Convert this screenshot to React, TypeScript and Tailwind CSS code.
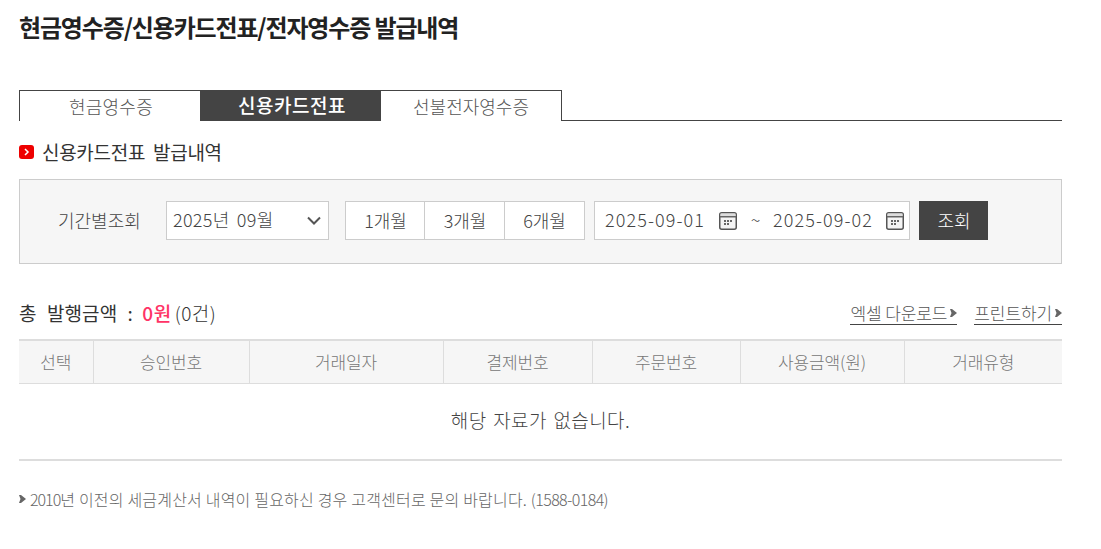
function Cal() {
  return (
    <svg width="18" height="18" viewBox="0 0 18 18" className="shrink-0">
      <rect x="0.75" y="0.75" width="16.5" height="16.5" rx="2" fill="#f4f4f4" stroke="#555" strokeWidth="1.5" />
      <rect x="1.5" y="1.5" width="15" height="2.5" fill="#ddd" />
      <rect x="1" y="4" width="16" height="1.5" fill="#666" />
      <path d="M5 8h2v2H5zM8 8h2v2H8zM11 8h2v2h-2zM5 11h2v2H5zM8 11h2v2H8z" fill="#666" />
    </svg>
  );
}
function Arrow() {
  return (
    <svg width="7" height="8" viewBox="0 0 7 8" className="inline-block shrink-0">
      <path d="M0 0h2l5 4-5 4H0l1.5-4z" fill="#666" />
    </svg>
  );
}
const cols = [
  ["선택", "w-[74px]"],
  ["승인번호", "w-[156px]"],
  ["거래일자", "w-[194px]"],
  ["결제번호", "w-[149px]"],
  ["주문번호", "w-[148px]"],
  ["사용금액(원)", "w-[164px]"],
  ["거래유형", "w-[158px]"],
];
export default function App() {
  return (
    <div className="w-[1101px] h-[549px] overflow-hidden bg-white pl-[19px] pr-[39px] font-['Noto_Sans_CJK_KR',sans-serif] text-[#333]">
      <h1 className="h-[90px] pt-[9px] text-[24px] leading-[36px] font-bold tracking-[-1.15px] text-[#222]">
        현금영수증/신용카드전표/전자영수증 발급내역
      </h1>
      <div className="flex h-[31px] text-[18px]">
        <div className="flex w-[181px] items-center justify-center border-l border-t border-[#444] pl-[2px] font-light tracking-[0.2px] text-[#555]">현금영수증</div>
        <div className="flex w-[181px] items-center justify-center bg-[#444] pl-[3px] text-[19px] font-medium tracking-[0.5px] text-white">신용카드전표</div>
        <div className="flex w-[181px] items-center justify-center border-r border-t border-[#444] bg-white font-light text-[#555]">
          <span>선불전자영수증</span>
        </div>
        <div className="flex-1 border-b border-[#444]" />
      </div>
      <div className="mt-[19px] flex h-[24px] items-center gap-[8px] text-[19px] tracking-[-0.3px] [word-spacing:4px] text-[#333]">
        <svg width="15" height="14" viewBox="0 0 15 14">
          <rect width="15" height="14" rx="3" fill="#ee0000" />
          <path d="M6 4L9 7L6 10" fill="none" stroke="#fff" strokeWidth="1.5" />
        </svg>
        <span>신용카드전표 발급내역</span>
      </div>
      <div className="mt-[15px] flex h-[85px] items-center border border-[#ccc] bg-[#f6f6f6] pb-[2px] pl-[38px] text-[18px] font-light text-[#444]">
        <span className="w-[108px] pb-[1px]">기간별조회</span>
        <div className="flex h-[39px] w-[163px] items-center justify-between border border-[#ccc] bg-white pl-[6px] pr-[7px]">
          <span className="pb-[2px] tracking-[0.3px] [word-spacing:3px]">2025년 09월</span>
          <svg width="14" height="9" viewBox="0 0 14 9"><path d="M1 1.5L7 7.5L13 1.5" fill="none" stroke="#555" strokeWidth="2" /></svg>
        </div>
        <div className="ml-[16px] flex h-[39px] w-[240px] border border-[#ccc] bg-white">
          <div className="flex w-[79px] items-center justify-center border-r border-[#ccc] pb-[1px] pl-[1px]">1개월</div>
          <div className="flex w-[80px] items-center justify-center border-r border-[#ccc] pb-[1px] pl-[1px]">3개월</div>
          <div className="flex flex-1 items-center justify-center pb-[1px]">6개월</div>
        </div>
        <div className="ml-[9px] flex h-[39px] w-[316px] items-center border border-[#ccc] bg-white pl-[10px] tracking-[1.1px]">
          <span className="w-[114px] pb-[2px]">2025-09-01</span>
          <Cal />
          <span className="ml-[12px] mr-[10px] w-[14px] pb-[2px] text-center text-[18px]">~</span>
          <span className="w-[113px] pb-[2px]">2025-09-02</span>
          <Cal />
        </div>
        <button className="ml-[9px] h-[39px] w-[69px] bg-[#444] pb-[1px] pl-[1px] text-white">조회</button>
      </div>
      <div className="mt-[35px] flex h-[28px] items-center justify-between">
        <div className="text-[19px] tracking-[0.1px] [word-spacing:6px] text-[#333]">
          총 발행금액 : <span className="-ml-[1px] font-medium tracking-[0.5px] text-[#ff3366]">0원</span><span className="ml-[3px] font-light tracking-[0.5px]">(0건)</span>
        </div>
        <div className="flex gap-[17px] text-[17px] font-light tracking-[-0.1px] text-[#555]">
          <span className="flex items-center gap-[3px] border-b border-[#444] leading-[22px]">엑셀 다운로드<Arrow /></span>
          <span className="flex items-center gap-[3px] border-b border-[#444] leading-[22px]">프린트하기<Arrow /></span>
        </div>
      </div>
      <table className="mt-[12px] w-[1043px] table-fixed border-t-2 border-[#ddd] text-center">
        <thead>
          <tr className="h-[43px] border-b border-[#ddd] bg-[#f6f6f6] text-[17px] font-light text-[#777]">
            {cols.map(([t, w], i) => (
              <th key={t} className={`${w} pb-[1px] font-light tracking-[-0.1px] ${i < 6 ? "border-r border-[#ddd]" : ""}`}>{t}</th>
            ))}
          </tr>
        </thead>
        <tbody>
          <tr className="h-[77px] border-b-2 border-[#ddd]">
            <td colSpan={7} className="pb-[2px] text-[19px] font-light tracking-[0.4px] [word-spacing:2px] text-[#444]">해당 자료가 없습니다.</td>
          </tr>
        </tbody>
      </table>
      <div className="mt-[26px] flex items-center gap-[4px] text-[16px] font-light tracking-[0.2px] text-[#666]">
        <Arrow />
        <span><span className="tracking-[-1px]">2010</span>년 이전의 세금계산서 내역이 필요하신 경우 고객센터로 문의 바랍니다. <span className="tracking-[-0.6px]">(1588-0184)</span></span>
      </div>
    </div>
  );
}
